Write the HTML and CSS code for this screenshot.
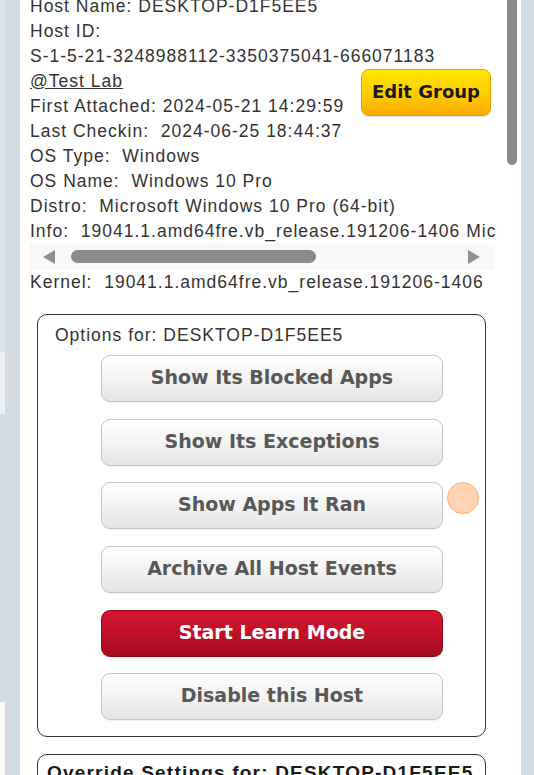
FILE: index.html
```html
<!DOCTYPE html>
<html lang="en">
<head>
<meta charset="utf-8">
<title>Host details</title>
<link rel="stylesheet" href="styles.css">
</head>
<body>
<div class="page">
  <div class="edge">
    <div class="edge-a"></div>
    <div class="edge-b"></div>
    <div class="edge-c"></div>
    <div class="edge-d"></div>
  </div>
  <div class="gutter"></div>
  <div class="panel">
    <div class="content">
      <div class="line">Host Name: DESKTOP-D1F5EE5</div>
      <div class="line">Host ID:</div>
      <div class="line">S-1-5-21-3248988112-3350375041-666071183</div>
      <button class="edit-group" type="button">Edit Group</button>
      <div class="line"><a class="group-link">@Test Lab</a></div>
      <div class="line">First Attached: 2024-05-21 14:29:59</div>
      <div class="line">Last Checkin:  2024-06-25 18:44:37</div>
      <div class="line">OS Type:  Windows</div>
      <div class="line">OS Name:  Windows 10 Pro</div>
      <div class="line">Distro:  Microsoft Windows 10 Pro (64-bit)</div>
      <div class="info-scroll">
        <div class="line">Info:  19041.1.amd64fre.vb_release.191206-1406 Microsoft Windows 10 Pro (64-bit)</div>
      </div>
      <div class="hscroll">
        <span class="arrow-left"></span>
        <span class="hthumb"></span>
        <span class="arrow-right"></span>
      </div>
      <div class="line">Kernel:  19041.1.amd64fre.vb_release.191206-1406</div>

      <div class="options">
        <div class="options-title">Options for: DESKTOP-D1F5EE5</div>
        <div class="actions">
          <div class="action-row"><button class="btn" type="button">Show Its Blocked Apps</button></div>
          <div class="action-row"><button class="btn" type="button">Show Its Exceptions</button></div>
          <div class="action-row"><button class="btn" type="button">Show Apps It Ran</button><span class="touch"></span></div>
          <div class="action-row"><button class="btn" type="button">Archive All Host Events</button></div>
          <div class="action-row"><button class="btn btn-danger" type="button">Start Learn Mode</button></div>
          <div class="action-row"><button class="btn" type="button">Disable this Host</button></div>
        </div>
      </div>

      <div class="override">
        <div class="override-title">Override Settings for: DESKTOP-D1F5EE5</div>
      </div>
    </div>
    <div class="vscroll"><div class="vthumb"></div></div>
  </div>
  <div class="gutter"></div>
</div>
</body>
</html>
```
FILE: styles.css
```css
html, body {
  margin: 0;
  padding: 0;
}

body {
  background: #d3dbe3;
  font-family: "Liberation Sans", Arial, sans-serif;
}

.page {
  display: grid;
  grid-template-columns: 5px 15px 501px 13px;
  height: 775px;
  overflow: hidden;
}

.edge {
  display: flex;
  flex-direction: column;
}

.edge-a { height: 352px; background: #dde3e8; }
.edge-b { height: 62px; background: #eef1f3; }
.edge-c { height: 288px; background: #d3dbe3; }
.edge-d { flex: 1; background: #fbfbfc; }

.panel {
  background: #fff;
  display: flex;
  overflow: hidden;
}

.content {
  width: 483px;
  flex: none;
  box-sizing: border-box;
  padding: 0 8px 0 10px;
  margin-top: -6.3px;
}

.vscroll {
  width: 18px;
  flex: none;
}

.vthumb {
  margin-left: 4px;
  width: 10px;
  height: 165px;
  background: #8a8a8a;
  border-radius: 0 0 5px 5px;
}

.line {
  font-size: 17.5px;
  letter-spacing: 1px;
  line-height: 25px;
  color: #333;
  white-space: pre;
}

.group-link {
  color: #333;
  text-decoration: underline;
}

.edit-group {
  float: right;
  margin: 0 4px 0 0;
  width: 130px;
  height: 47px;
  box-sizing: border-box;
  padding: 0 0 2px;
  border: 1px solid #e2a000;
  border-radius: 8px;
  background: linear-gradient(#ffe600, #ffd200 45%, #ffaa00);
  font: bold 18px "DejaVu Sans", Verdana, sans-serif;
  color: #1a1a1a;
  box-shadow: 0 1px 1px rgba(0, 0, 0, 0.12);
}

.info-scroll {
  overflow: hidden;
}

.hscroll {
  height: 26.5px;
  background: #f8f8f8;
  display: flex;
  align-items: center;
  padding: 0 15px 0 13px;
}

.arrow-left {
  width: 0;
  height: 0;
  border-top: 7.5px solid transparent;
  border-bottom: 7.5px solid transparent;
  border-right: 12px solid #8f8f8f;
}

.arrow-right {
  margin-left: auto;
  width: 0;
  height: 0;
  border-top: 7.5px solid transparent;
  border-bottom: 7.5px solid transparent;
  border-left: 12px solid #8f8f8f;
}

.hthumb {
  margin-left: 16px;
  width: 245px;
  height: 13px;
  border-radius: 6.5px;
  background: #8a8a8a;
}

.options {
  margin: 18.3px 9px 0 7px;
  border: 1px solid #333;
  border-radius: 10px;
  padding: 8.4px 0 15.7px 17px;
}

.options-title {
  font-size: 17.5px;
  letter-spacing: 1px;
  line-height: 25px;
  color: #333;
  white-space: pre;
}

.actions {
  display: flex;
  flex-direction: column;
  gap: 16.6px;
  margin-top: 7.3px;
  padding-left: 46px;
}

.action-row {
  display: flex;
  align-items: flex-start;
  gap: 4px;
}

.btn {
  width: 342px;
  height: 47px;
  box-sizing: border-box;
  padding: 0 0 3px;
  border: 1px solid #c6c6c6;
  border-radius: 9px;
  background: linear-gradient(#fefefe, #f3f3f3 50%, #e5e5e5);
  font: bold 19px "DejaVu Sans", Verdana, sans-serif;
  color: #585858;
  box-shadow: 0 1px 1px rgba(0, 0, 0, 0.06);
}

.btn-danger {
  background: linear-gradient(#d4172f, #bf1027 50%, #a20b1f);
  border-color: #960a1b;
  color: #fff;
}

.touch {
  width: 32px;
  height: 32px;
  flex: none;
  box-sizing: border-box;
  border-radius: 50%;
  background: #fdd3b3;
  border: 1.5px solid #f7b37b;
}

.override {
  margin: 17px 9px 0 7px;
  border: 1px solid #333;
  border-radius: 10px;
  padding: 5px 9px 10px;
}

.override-title {
  font-weight: bold;
  font-size: 19px;
  letter-spacing: 1.2px;
  line-height: 25px;
  color: #1a1a1a;
  white-space: pre;
}
```
